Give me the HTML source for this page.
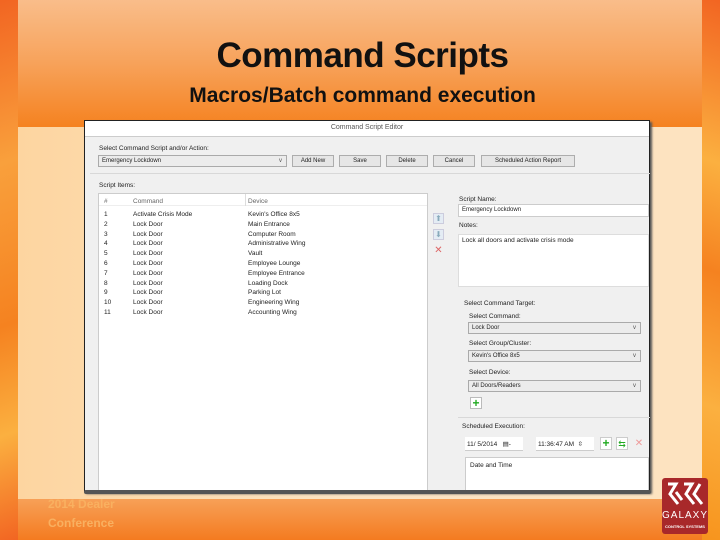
<!DOCTYPE html>
<html><head><meta charset="utf-8"><style>
*{margin:0;padding:0;box-sizing:border-box}
body{width:720px;height:540px;overflow:hidden;position:relative;background:#f7941d;font-family:"Liberation Sans",sans-serif}
.a{position:absolute}
.t{font-size:6.5px;color:#222;white-space:nowrap}
.btn{position:absolute;top:155px;height:12px;background:#e6e6e6;border:1px solid #adadad;font-size:6px;text-align:center;line-height:10px;color:#222}
.dd{position:absolute;height:12px;background:#ececec;border:1px solid #aaa;font-size:6px;line-height:10px;padding-left:3px;color:#222}
.dd:after{content:"v";position:absolute;right:4px;top:0;font-size:6px;color:#555}
</style></head><body>
<div class="a" style="left:0;top:0;width:18px;height:540px;background:linear-gradient(160deg,#f26522 0%,#f9a03c 30%,#f58220 60%,#fbb040 80%,#f26522 100%)"></div>
<div class="a" style="left:702px;top:0;width:18px;height:540px;background:linear-gradient(200deg,#f26522 0%,#fbb040 30%,#f58220 50%,#fbb040 75%,#f7941d 100%)"></div>
<div class="a" style="left:18px;top:0;width:684px;height:127px;background:linear-gradient(#f9bd8a,#f7a25a 50%,#f58220)"></div>
<div class="a" style="left:18px;top:127px;width:684px;height:372px;background:linear-gradient(90deg,#fdd5a0,#fde4c4 50%,#fde3c0)"></div>
<div class="a" style="left:18px;top:499px;width:684px;height:41px;background:linear-gradient(#f7a057,#f47b20)"></div>
<div class="a" style="left:0;top:36px;width:725px;text-align:center;font-size:35px;font-weight:bold;color:#111;letter-spacing:-0.5px">Command Scripts</div>
<div class="a" style="left:0;top:84px;width:725px;text-align:center;font-size:21px;font-weight:bold;color:#111">Macros/Batch command execution</div>
<div class="a" style="left:48px;top:495px;font-size:12px;font-weight:bold;color:#f9b060;line-height:19px">2014 Dealer<br>Conference</div>
<!-- logo -->
<div class="a" style="left:662px;top:478px;width:46px;height:56px;background:#a8282a;border-radius:3px"></div>
<svg class="a" style="left:664px;top:480px" width="42" height="30" viewBox="0 0 42 30"><path d="M4 4 L12 4 L6 14 L14 24 M12 12 L18 20 M20 4 L28 4 L22 14 L30 24 M36 4 L30 14 L38 24" stroke="#fff" stroke-width="3" fill="none"/></svg>
<div class="a" style="left:662px;top:510px;width:46px;text-align:center;font-size:10px;color:#fff;letter-spacing:1px">GALAXY</div>
<div class="a" style="left:662px;top:524px;width:46px;text-align:center;font-size:4px;color:#fff;font-weight:bold">CONTROL SYSTEMS</div>
<!-- window -->
<div class="a" style="left:84px;top:120px;width:566px;height:372px;background:#f0f0f0;border:1px solid #222;border-bottom:none;box-shadow:2px 2px 2px #555"></div>
<div class="a" style="left:85px;top:121px;width:564px;height:16px;background:#fff;border-bottom:1px solid #ccc"></div>
<div class="a t" style="left:85px;top:124px;width:564px;text-align:center;color:#555;font-size:7px">Command Script Editor</div>
<div class="a t" style="left:99px;top:145px">Select Command Script and/or Action:</div>
<div class="dd" style="left:98px;top:155px;width:189px">Emergency Lockdown</div>
<div class="btn" style="left:292px;width:42px">Add New</div>
<div class="btn" style="left:339px;width:42px">Save</div>
<div class="btn" style="left:386px;width:42px">Delete</div>
<div class="btn" style="left:433px;width:42px">Cancel</div>
<div class="btn" style="left:481px;width:94px">Scheduled Action Report</div>
<div class="a" style="left:90px;top:173px;width:560px;height:1px;background:#d8d8d8"></div>
<div class="a t" style="left:99px;top:182px">Script Items:</div>
<div class="a" style="left:98px;top:193px;width:330px;height:298px;background:#fff;border:1px solid #ccc"></div>
<div class="a" style="left:99px;top:194px;width:328px;height:12px;border-bottom:1px solid #eee"></div>
<div class="a t" style="left:104px;top:198px;color:#666">#</div>
<div class="a t" style="left:133px;top:198px;color:#666">Command</div>
<div class="a t" style="left:248px;top:198px;color:#666">Device</div>
<div class="a" style="left:245px;top:194px;width:1px;height:12px;background:#ddd"></div>
<div class="a t" style="left:104px;top:210px;line-height:9.8px">1<br>2<br>3<br>4<br>5<br>6<br>7<br>8<br>9<br>10<br>11</div>
<div class="a t" style="left:133px;top:210px;line-height:9.8px">Activate Crisis Mode<br>Lock Door<br>Lock Door<br>Lock Door<br>Lock Door<br>Lock Door<br>Lock Door<br>Lock Door<br>Lock Door<br>Lock Door<br>Lock Door</div>
<div class="a t" style="left:248px;top:210px;line-height:9.8px">Kevin's Office 8x5<br>Main Entrance<br>Computer Room<br>Administrative Wing<br>Vault<br>Employee Lounge<br>Employee Entrance<br>Loading Dock<br>Parking Lot<br>Engineering Wing<br>Accounting Wing</div>
<div class="a" style="left:433px;top:213px;width:11px;height:11px;background:#e4ecf4;border:1px solid #ccd;color:#8ab;font-size:8px;text-align:center;line-height:10px">⬆</div>
<div class="a" style="left:433px;top:229px;width:11px;height:11px;background:#e4ecf4;border:1px solid #ccd;color:#8ab;font-size:8px;text-align:center;line-height:10px">⬇</div>
<div class="a" style="left:433px;top:245px;width:11px;height:11px;color:#d66;font-size:10px;text-align:center;line-height:11px">✕</div>
<div class="a t" style="left:459px;top:196px">Script Name:</div>
<div class="a t" style="left:458px;top:204px;width:191px;height:13px;background:#fff;border:1px solid #ccc;padding:2px 3px;font-size:6px">Emergency Lockdown</div>
<div class="a t" style="left:459px;top:222px">Notes:</div>
<div class="a t" style="left:458px;top:234px;width:191px;height:53px;background:#fff;border:1px solid #ddd;padding:2px 3px;font-size:6.5px">Lock all doors and activate crisis mode</div>
<div class="a t" style="left:464px;top:300px">Select Command Target:</div>
<div class="a t" style="left:469px;top:313px">Select Command:</div>
<div class="dd" style="left:468px;top:322px;width:173px">Lock Door</div>
<div class="a t" style="left:469px;top:340px">Select Group/Cluster:</div>
<div class="dd" style="left:468px;top:350px;width:173px">Kevin's Office 8x5</div>
<div class="a t" style="left:469px;top:369px">Select Device:</div>
<div class="dd" style="left:468px;top:380px;width:173px">All Doors/Readers</div>
<div class="a" style="left:470px;top:397px;width:12px;height:12px;background:#fff;border:1px solid #bbb;color:#2a2;font-weight:bold;font-size:12px;line-height:10px;text-align:center">+</div>
<div class="a" style="left:458px;top:417px;width:192px;height:1px;background:#d8d8d8"></div>
<div class="a t" style="left:462px;top:423px">Scheduled Execution:</div>
<div class="a t" style="left:465px;top:437px;width:58px;height:14px;background:#fff;border-bottom:1px solid #ccc;padding:3px 2px;font-size:6.5px">11/ 5/2014 &nbsp;&nbsp;▤-</div>
<div class="a t" style="left:536px;top:437px;width:58px;height:14px;background:#fff;border-bottom:1px solid #ccc;padding:3px 2px;font-size:6.5px">11:36:47 AM &nbsp;⇳</div>
<div class="a" style="left:600px;top:437px;width:12px;height:13px;background:#fff;border:1px solid #ccc;color:#2a2;font-weight:bold;font-size:12px;line-height:11px;text-align:center">+</div>
<div class="a" style="left:616px;top:437px;width:12px;height:13px;background:#fff;border:1px solid #ccc;color:#2a2;font-size:9px;line-height:12px;text-align:center">⇆</div>
<div class="a" style="left:634px;top:437px;width:10px;height:13px;color:#e99;font-size:10px;line-height:13px;text-align:center">✕</div>
<div class="a t" style="left:465px;top:457px;width:184px;height:36px;background:#fff;border:1px solid #ccc;padding:4px 4px;font-size:6.5px">Date and Time</div>
<div class="a" style="left:84px;top:490px;width:567px;height:4px;background:#555;border-radius:2px"></div>
</body></html>
